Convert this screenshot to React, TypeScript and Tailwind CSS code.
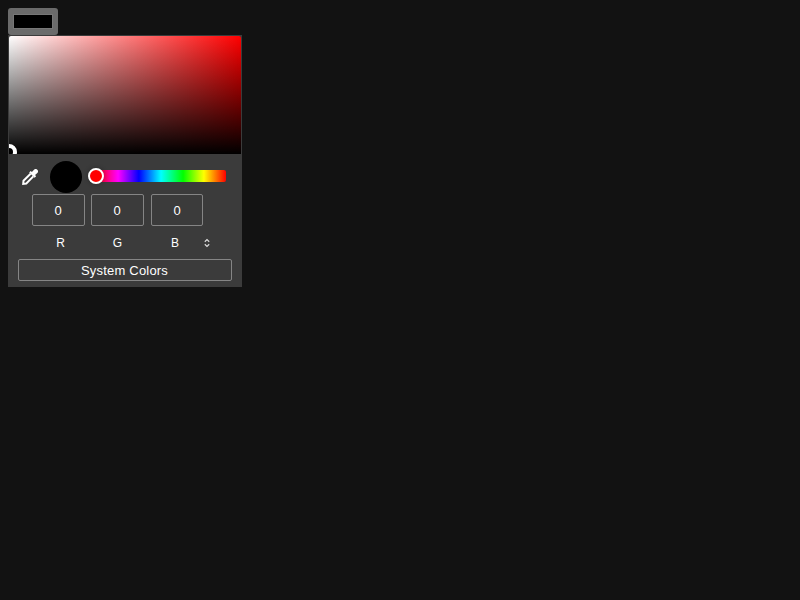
const channels = [
  { name: 'R', value: 0, box: 'w-[53px] pr-[1px]', label: 'w-[57px]' },
  { name: 'G', value: 0, box: 'w-[53px] ml-[6px] pr-[1px]', label: 'w-[57px]' },
  { name: 'B', value: 0, box: 'w-[52px] ml-[7px]', label: 'w-[58px]' },
];

function Eyedropper() {
  return (
    <svg className="ml-[13px] h-[16px] w-[16px]" viewBox="0 0 16 16" fill="none">
      <path d="M8.6 4.8 1.5 11.7 1.2 14.8 4.3 14.5 11.3 7.4" stroke="#fff" strokeWidth="2" />
      <path
        d="M15.3.8a2.3 2.3 0 0 0-3.3 0L9.9 2.9 8.7 1.9 7.2 3.4l5.4 5.4 1.5-1.5-1-1.2L15.3 4a2.3 2.3 0 0 0 0-3.2Z"
        fill="#fff"
      />
    </svg>
  );
}

export default function App() {
  return (
    <main className="h-[600px] w-[800px] overflow-hidden bg-[#121212] p-2 font-['Liberation_Sans',Arial,sans-serif] text-[13px] text-white">
      <div className="flex h-[27px] w-[50px] items-start justify-center rounded-[3px] bg-[#6b6b6b] pt-[6px]">
        <div className="h-[15px] w-[40px] border border-[#777] bg-black" />
      </div>

      <section className="flex h-[252px] w-[234px] flex-col border border-[#3b3b3b] bg-[#3b3b3b]">
        <div className="relative h-[118px] shrink-0 overflow-hidden rounded-t-[2px] bg-[linear-gradient(to_top,#000,transparent),linear-gradient(to_right,#fff,#f00)]">
          <div className="absolute bottom-[-6px] left-[-8px] h-4 w-4 rounded-full border-4 border-white bg-black" />
        </div>

        <div className="flex h-[40px] items-start pt-[7px]">
          <div className="pt-[8px]">
            <Eyedropper />
          </div>
          <div className="ml-[12px] h-8 w-8 rounded-full bg-black" />
          <div className="relative mt-[9px] ml-[14px] h-[12px] w-[130px] rounded-[2px] bg-[linear-gradient(to_left,#f00,#ff0_17%,#0f0_33%,#0ff_50%,#00f_67%,#f0f_83%,#f00)]">
            <div className="absolute top-[-2px] left-[-8px] h-4 w-4 rounded-full border-2 border-white bg-[#f00] shadow-[0_0_5px_rgba(0,0,0,0.3)]" />
          </div>
        </div>

        <div className="flex pl-[23px]">
          {channels.map((c) => (
            <div
              key={c.name}
              className={`${c.box} flex h-8 shrink-0 items-center justify-center rounded-[2px] border border-[#858585] pt-[2px]`}
            >
              {c.value}
            </div>
          ))}
        </div>

        <div className="mt-[9px] flex h-4 items-center pl-[23px] text-[12px]">
          {channels.map((c) => (
            <div key={c.name} className={`${c.label} text-center`}>
              {c.name}
            </div>
          ))}
          <svg className="ml-[-1px] h-[10px] w-[8px]" viewBox="0 0 8 10" fill="none" stroke="#ddd" strokeWidth="1.2">
            <path d="M1.8 3.7 4 1.6l2.2 2.1M1.8 6.3 4 8.4l2.2-2.1" />
          </svg>
        </div>

        <div className="mt-[8px] ml-[9px] flex h-[22px] w-[214px] items-center justify-center rounded-[2px] border border-[#858585] pt-[2px] pr-[1px] tracking-[0.2px]">
          System Colors
        </div>
      </section>
    </main>
  );
}
